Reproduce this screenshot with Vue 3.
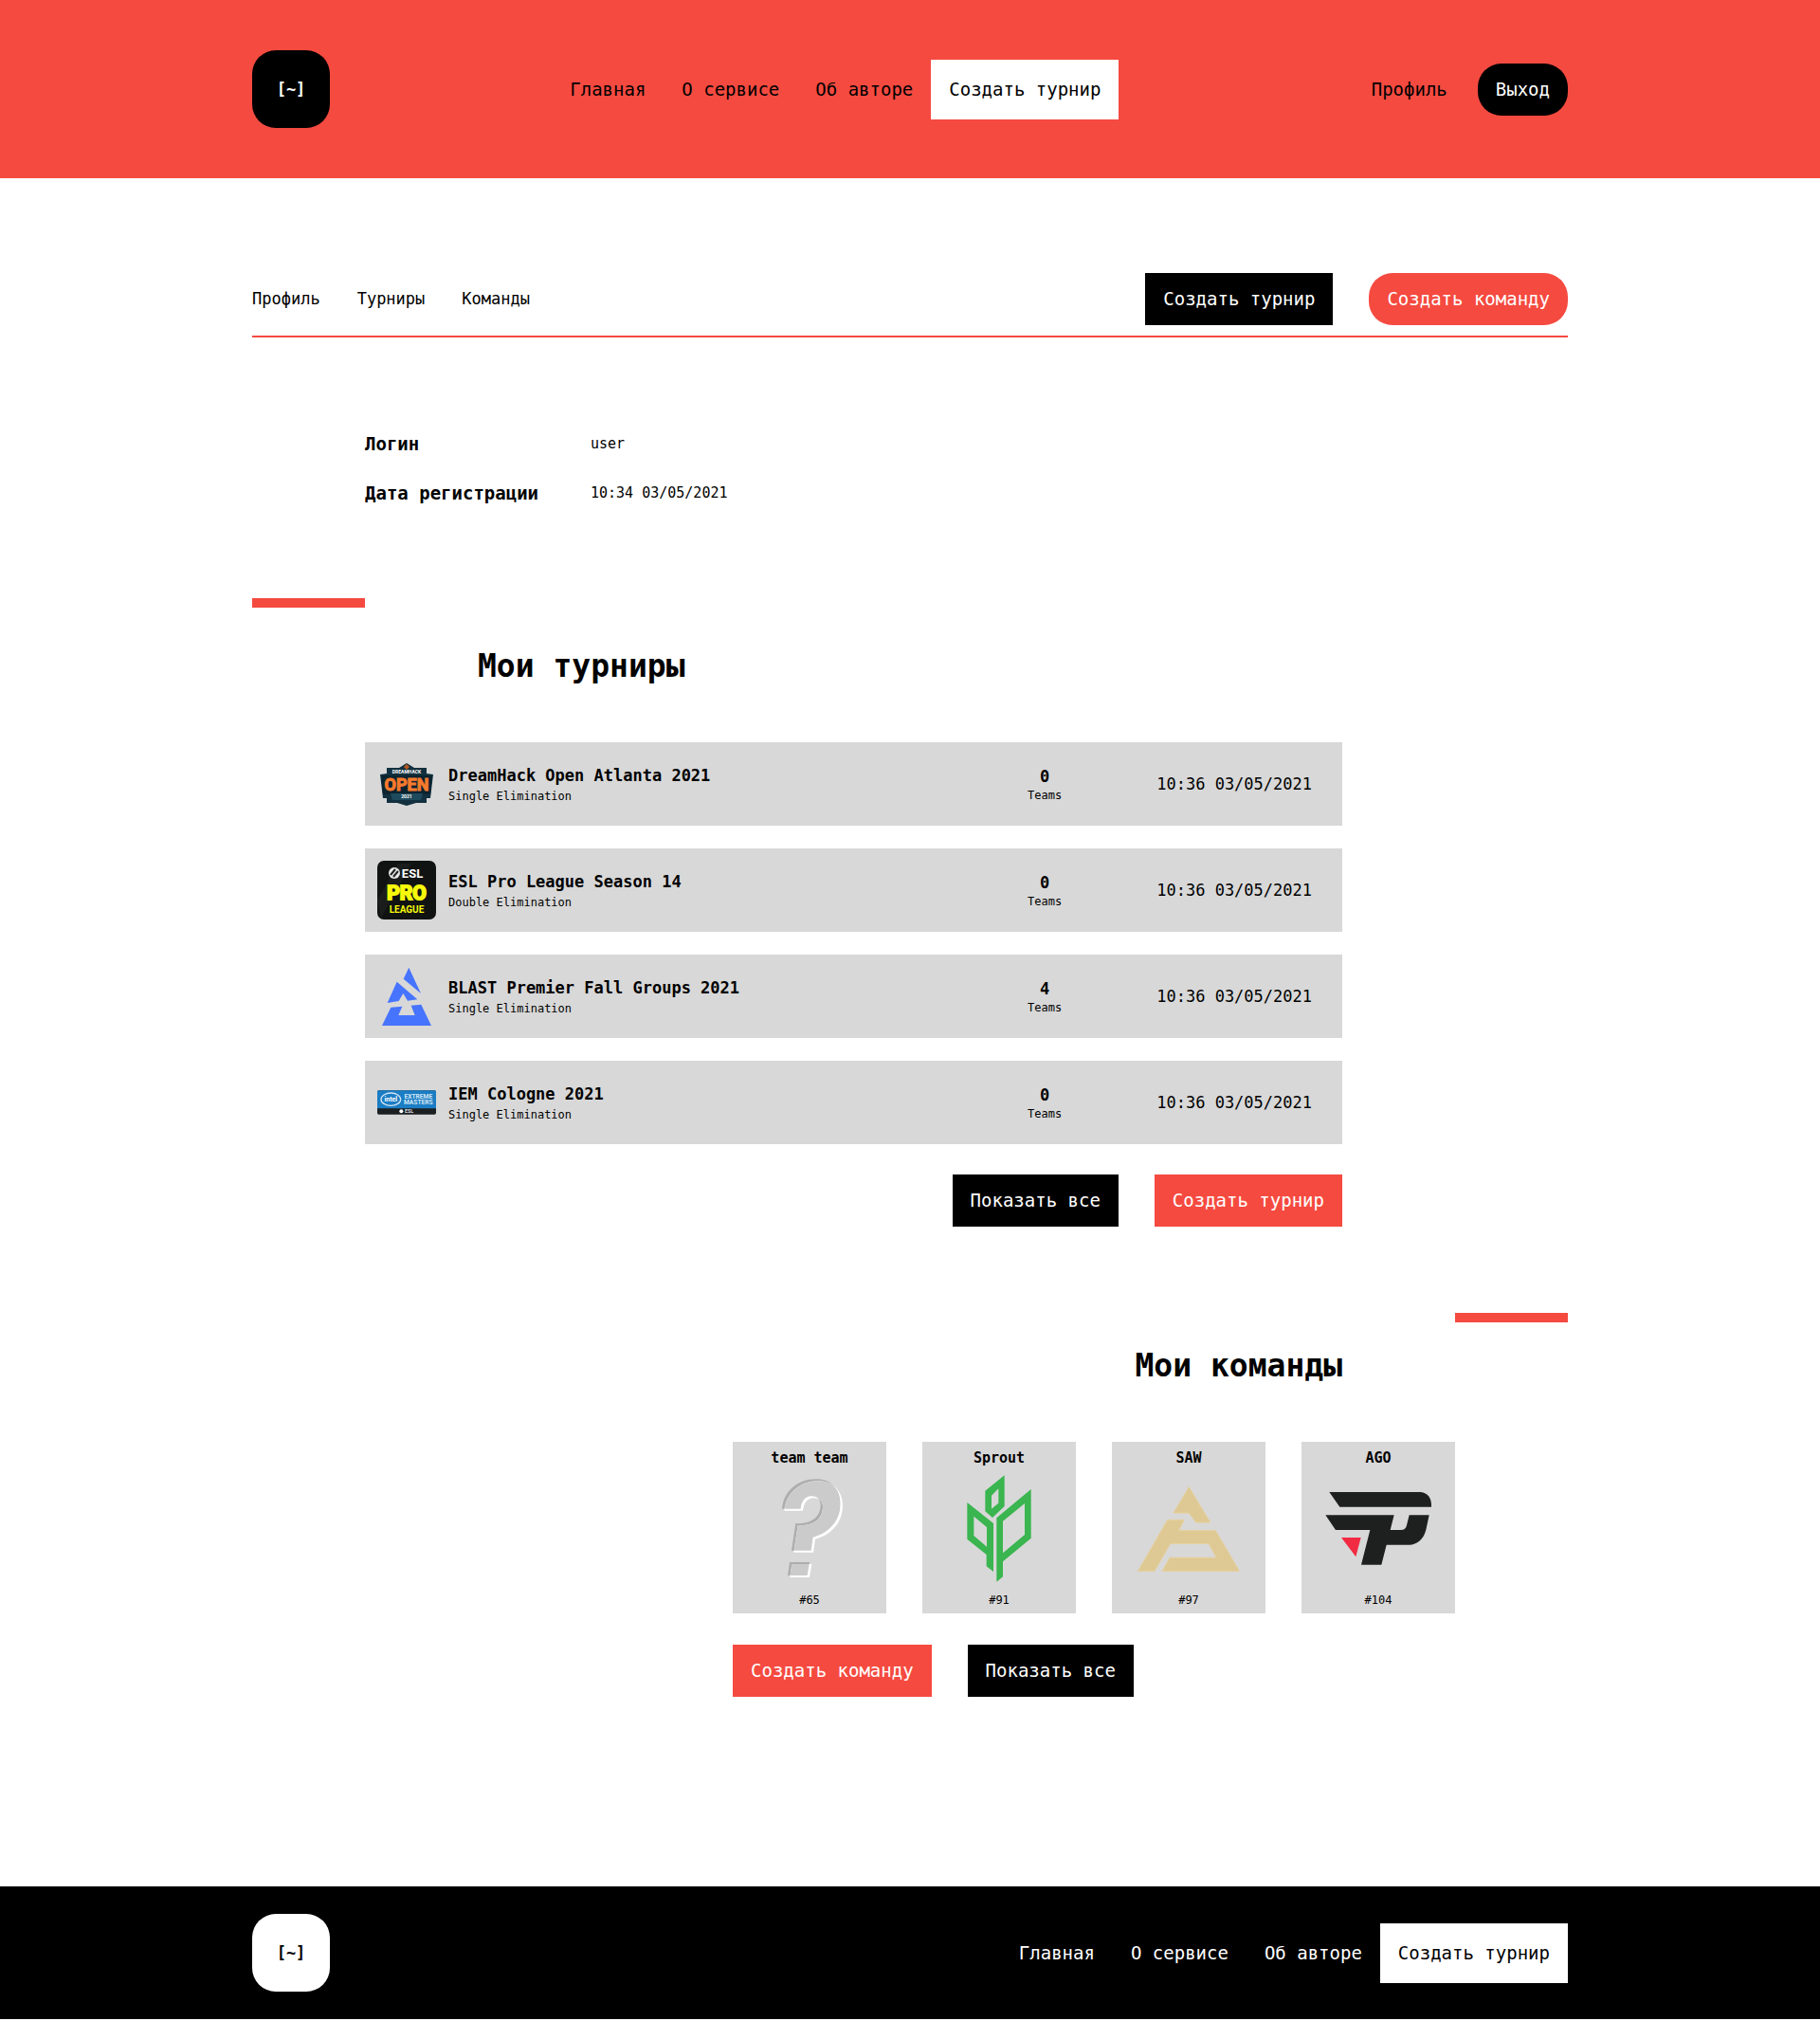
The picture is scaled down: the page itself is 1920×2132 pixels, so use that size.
<script setup>
const menu = ['Главная', 'О сервисе', 'Об авторе']
const tabs = ['Профиль', 'Турниры', 'Команды']
const tournaments = [
  { id: 'dreamhack', name: 'DreamHack Open Atlanta 2021', type: 'Single Elimination', teams: 0, date: '10:36 03/05/2021' },
  { id: 'esl', name: 'ESL Pro League Season 14', type: 'Double Elimination', teams: 0, date: '10:36 03/05/2021' },
  { id: 'blast', name: 'BLAST Premier Fall Groups 2021', type: 'Single Elimination', teams: 4, date: '10:36 03/05/2021' },
  { id: 'iem', name: 'IEM Cologne 2021', type: 'Single Elimination', teams: 0, date: '10:36 03/05/2021' },
]
const teams = [
  { id: 65, name: 'team team' },
  { id: 91, name: 'Sprout' },
  { id: 97, name: 'SAW' },
  { id: 104, name: 'AGO' },
]
</script>

<template>
  <div class="page">
    <header class="header">
      <div class="container bar">
        <a href="#" class="logo">[~]</a>
        <nav class="menu">
          <a v-for="item in menu" :key="item" href="#" class="menu-link">{{ item }}</a>
          <a href="#" class="menu-link boxed">Создать турнир</a>
        </nav>
        <div class="account">
          <a href="#" class="account-link">Профиль</a>
          <button type="button" class="btn black round">Выход</button>
        </div>
      </div>
    </header>

    <main class="container main">
      <div class="toolbar">
        <nav class="tabs">
          <a v-for="tab in tabs" :key="tab" href="#">{{ tab }}</a>
        </nav>
        <div class="actions">
          <button type="button" class="btn black">Создать турнир</button>
          <button type="button" class="btn red round">Создать команду</button>
        </div>
      </div>

      <dl class="info">
        <dt>Логин</dt>
        <dd>user</dd>
        <dt>Дата регистрации</dt>
        <dd>10:34 03/05/2021</dd>
      </dl>

      <section class="tournaments">
        <div class="accent"></div>
        <h2>Мои турниры</h2>
        <ul class="rows">
          <li v-for="t in tournaments" :key="t.id" class="row">
            <svg v-if="t.id === 'dreamhack'" class="row-icon" viewBox="0 0 62 62" aria-hidden="true">
              <path d="M31 9l8 5h13v6l7 1-3 25h-4v5H41l-10 3-10-3H10v-5H6L3 21l7-1v-6h13z" fill="#12303f" />
              <path d="M4 22h54l-2 20H6z" fill="#0b2430" />
              <path d="M14 41h34l-2 7H16z" fill="#1e4a5d" />
              <path d="M31 10l3 3-3 3-3-3z" fill="#b5561f" />
              <text x="31" y="20" class="mark" font-size="5" fill="#fff">DREAMHACK</text>
              <text x="31" y="38" class="mark" font-size="18" fill="#f67a2c" stroke="#f67a2c" stroke-width="1">OPEN</text>
              <text x="31" y="46" class="mark" font-size="5" fill="#fff">2021</text>
            </svg>
            <svg v-else-if="t.id === 'esl'" class="row-icon" viewBox="0 0 62 62" aria-hidden="true">
              <rect width="62" height="62" rx="7" fill="#111312" />
              <path d="M0 42L22 3h14L4 60z" fill="#1b1d1c" />
              <circle cx="18" cy="13" r="6" fill="#e8e8e8" />
              <path d="M14 15l5-6M17 17l5-6" stroke="#222" stroke-width="2" />
              <text x="37" y="18" class="mark" font-size="13" fill="#fff">ESL</text>
              <text x="31" y="41" class="mark" font-size="21" fill="#f6f90c" stroke="#f6f90c" stroke-width="2">PRO</text>
              <text x="31" y="55" class="mark" font-size="10" fill="#f6f90c">LEAGUE</text>
            </svg>
            <svg v-else-if="t.id === 'blast'" class="row-icon" viewBox="54 90 186 186" aria-hidden="true">
              <path d="M154 92L192 174L137 128Z M116 137L181 193L150 197L136 174L122 198L86 204Z M97 218L133 215L121 243H173L161 212L193 209L225 276H69Z" fill="#4774ff" />
            </svg>
            <svg v-else class="row-icon" viewBox="0 0 186 186" aria-hidden="true">
              <rect y="55" width="186" height="76" rx="5" fill="#1b1f22" />
              <path d="M0 112V60q0-5 5-5h176q5 0 5 5v52z" fill="#1b7dc4" />
              <ellipse cx="43" cy="83" rx="31" ry="20" fill="none" stroke="#cfe4f4" stroke-width="4" />
              <text x="43" y="90" class="mark" font-size="21" fill="#fff">intel</text>
              <text x="130" y="80" class="mark" font-size="20" fill="#d5e8f6">EXTREME</text>
              <text x="130" y="99" class="mark" font-size="20" fill="#d5e8f6">MASTERS</text>
              <circle cx="76" cy="121" r="6" fill="#fff" />
              <text x="101" y="127" class="mark" font-size="16" fill="#ddd">ESL</text>
            </svg>
            <div class="row-title">
              <strong>{{ t.name }}</strong>
              <span>{{ t.type }}</span>
            </div>
            <div class="row-teams">
              <strong>{{ t.teams }}</strong>
              <span>Teams</span>
            </div>
            <time class="row-date">{{ t.date }}</time>
          </li>
        </ul>
        <div class="actions end">
          <button type="button" class="btn black">Показать все</button>
          <button type="button" class="btn red">Создать турнир</button>
        </div>
      </section>

      <section class="teams">
        <div class="accent right"></div>
        <h2>Мои команды</h2>
        <div class="team-block">
          <ul class="cards">
            <li v-for="team in teams" :key="team.id" class="card">
              <strong>{{ team.name }}</strong>
              <svg v-if="team.id === 65" class="card-icon" viewBox="102 549 360 360" aria-hidden="true">
                <defs>
                  <path id="question" d="M195 668C200 612 245 574 302 574C350 574 380 605 380 652C380 704 345 745 293 758L287 800H225L238 714C285 718 317 696 317 655C317 637 305 628 288 628C268 628 256 645 254 668Z M219 837H282L275 879H213Z" />
                  <clipPath id="question-clip"><use href="#question" /></clipPath>
                </defs>
                <use href="#question" fill="#adadad" />
                <use href="#question" x="7" y="6" fill="#fff" />
                <g clip-path="url(#question-clip)"><use href="#question" x="7" y="6" fill="#cbcbcb" /></g>
              </svg>
              <svg v-else-if="team.id === 91" class="card-icon" viewBox="702 549 360 360" aria-hidden="true">
                <path fill="#3ab54f" fill-rule="evenodd" d="M899 562V660L861 696L838 676V611Z M858 626V668L880 650V604Z M781 648L864 714V867L842 850V813L781 764Z M802 692V753L843 788V726Z M983 606V761L894 835V883L874 899V697Z M963 651L894 707V808L963 750Z" />
              </svg>
              <svg v-else-if="team.id === 97" class="card-icon" viewBox="132 549 360 360" aria-hidden="true">
                <path fill="#dec994" stroke="#e6d09a" stroke-width="3" d="M313 599L380 711H335L313 681H264Z M245 703H298L280 737H397L472 865H229L252 823H400L375 778H254L204 865H152Z" />
              </svg>
              <svg v-else class="card-icon" viewBox="732 549 360 360" aria-hidden="true">
                <path fill="#1e201f" d="M757 615H1046C1068 617 1082 634 1080 662H790Z M745 688H962L950 735H984Q999 735 1002 720L1010 688H1073L1063 735C1055 765 1035 782 1010 782H938L922 845H858L886 735H777Z" />
                <path fill="#f12b42" d="M795 759H857L841 820Z" />
              </svg>
              <span>#{{ team.id }}</span>
            </li>
          </ul>
          <div class="actions">
            <button type="button" class="btn red">Создать команду</button>
            <button type="button" class="btn black">Показать все</button>
          </div>
        </div>
      </section>
    </main>

    <footer class="footer">
      <div class="container bar">
        <a href="#" class="logo light">[~]</a>
        <nav class="menu light">
          <a v-for="item in menu" :key="item" href="#" class="menu-link">{{ item }}</a>
          <a href="#" class="menu-link boxed">Создать турнир</a>
        </nav>
      </div>
    </footer>
  </div>
</template>

<style>
body {
  margin: 0;
  background: #fff;
}
</style>

<style scoped>
.page {
  --red: #f54a40;
  --gray: #d8d8d8;
  --step: 119px;
  color: #000;
  font-family: "DejaVu Sans Mono", "Liberation Mono", monospace;
  font-size: 19px;
  line-height: 23px;
}
.page * {
  box-sizing: border-box;
}
a {
  color: inherit;
  text-decoration: none;
}
ul,
dl,
dd,
h2 {
  margin: 0;
  padding: 0;
  list-style: none;
}
.container {
  width: calc(100% - 80px);
  max-width: 1388px;
  margin: 0 auto;
}
.bar {
  display: flex;
  align-items: center;
  justify-content: space-between;
}
.header {
  padding: 53px 0;
  background: var(--red);
}
.logo {
  display: flex;
  align-items: center;
  justify-content: center;
  width: 82px;
  height: 82px;
  border-radius: 25px;
  background: #000;
  color: #fff;
  font-size: 17px;
  font-weight: 700;
}
.logo.light {
  background: #fff;
  color: #000;
}
.menu {
  display: flex;
  align-items: center;
}
.menu.light {
  color: #fff;
}
.menu-link {
  padding: 20px 19px;
  white-space: nowrap;
}
.menu-link.boxed {
  background: #fff;
  color: #000;
}
.account {
  display: flex;
  align-items: center;
  gap: 32px;
  padding-left: 32px;
}
.btn {
  padding: 16px 19px;
  border: 0;
  color: #fff;
  font: inherit;
  white-space: nowrap;
  cursor: pointer;
}
.black {
  background: #000;
}
.red {
  background: var(--red);
}
.round {
  border-radius: 25px;
}
.main {
  padding: 100px 0 200px;
}
.toolbar {
  display: flex;
  align-items: center;
  justify-content: space-between;
  padding-bottom: 11px;
  border-bottom: 2px solid var(--red);
}
.tabs {
  display: flex;
  gap: 39px;
  font-size: 17px;
}
.actions {
  display: flex;
  gap: 38px;
}
.info {
  display: grid;
  grid-template-columns: calc(var(--step) * 2) 1fr;
  row-gap: 29px;
  margin: 101px 0 99px var(--step);
}
.info dt {
  font-weight: 700;
  white-space: nowrap;
}
.info dd {
  font-size: 15px;
}
.accent {
  width: var(--step);
  height: 10px;
  background: var(--red);
}
.accent.right {
  margin-left: auto;
}
h2 {
  font-size: 33px;
  line-height: 44px;
  font-weight: 700;
}
.tournaments h2 {
  margin: 40px 0 58px calc(var(--step) * 2);
}
.rows {
  display: flex;
  flex-direction: column;
  gap: 24px;
  margin: 0 calc(var(--step) * 2) 32px var(--step);
}
.row {
  display: flex;
  align-items: center;
  min-height: 88px;
  padding: 13px 32px 13px 13px;
  background: var(--gray);
  font-size: 17px;
}
.row-icon {
  flex: none;
  width: 62px;
  height: 62px;
}
.mark {
  font-family: Roboto, "Liberation Sans", sans-serif;
  font-weight: 700;
  text-anchor: middle;
}
.row-title,
.row-teams {
  display: flex;
  flex-direction: column;
}
.row-title {
  flex: 1;
  gap: 2px;
  margin-left: 13px;
}
.row-teams {
  align-items: center;
  margin-right: 100px;
}
.row-title span,
.row-teams span {
  font-size: 12px;
  line-height: 16px;
}
.actions.end {
  justify-content: flex-end;
  margin-right: calc(var(--step) * 2);
}
.teams {
  margin-top: 91px;
}
.teams h2 {
  margin: 24px calc(var(--step) * 2) 58px 0;
  text-align: right;
}
.team-block {
  display: flex;
  flex-direction: column;
  gap: 33px;
  width: max-content;
  margin: 0 var(--step) 0 auto;
}
.cards {
  display: flex;
  gap: 38px;
}
.card {
  display: flex;
  flex-direction: column;
  align-items: center;
  width: 162px;
  padding: 6px 0 2px;
  background: var(--gray);
  font-size: 15px;
}
.card-icon {
  width: 120px;
  height: 120px;
  margin: 2px 0 5px;
}
.card span {
  font-size: 12px;
}
.footer {
  padding: 29px 0;
  background: #000;
}
</style>
